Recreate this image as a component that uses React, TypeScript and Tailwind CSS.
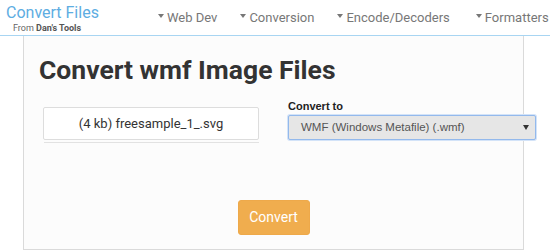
import React from "react";

const roboto = { fontFamily: "Roboto, 'Liberation Sans', sans-serif" };

function Caret() {
  return (
    <span className="inline-block w-0 h-0 border-l-[3px] border-r-[3px] border-t-[4px] border-l-transparent border-r-transparent border-t-[#777] mr-[3px] mb-[2px]" />
  );
}

function NavItem({ label }: { label: string }) {
  return (
    <div className="flex items-center text-[13px] text-[#777] leading-none shrink-0">
      <Caret />
      <span>{label}</span>
    </div>
  );
}

export default function App() {
  return (
    <div className="w-[550px] h-[251px] bg-white overflow-hidden" style={roboto}>
      <header className="h-[36px] border-b border-[#a8d5f2] flex items-center">
        <div className="w-[158px] shrink-0 pl-[6px] flex flex-col">
          <span className="text-[16px] leading-[18px] text-[#5dade2] mt-[2px]">Convert Files</span>
          <span className="text-[9px] leading-[10px] pl-[7px] text-[#666] mt-[1px]">
            From <span className="font-bold text-[#555]">Dan's Tools</span>
          </span>
        </div>
        <nav className="flex items-center gap-[23px] mb-[1px]">
          <NavItem label="Web Dev" />
          <NavItem label="Conversion" />
          <div className="mr-[3px]">
            <NavItem label="Encode/Decoders" />
          </div>
          <NavItem label="Formatters" />
        </nav>
      </header>
      <main className="ml-[23px] w-[501px] h-[214px] border-x border-b border-[#dadada] bg-[#fcfcfc]">
        <h1 className="pt-[18px] pl-[15px] text-[26.5px] leading-[31px] font-bold text-[#333] whitespace-nowrap">
          Convert wmf Image Files
        </h1>
        <div className="flex items-start mt-[13px] pl-[19px]">
          <div className="w-[216px] shrink-0 mt-[9px] flex flex-col">
            <div className="h-[33px] border border-[#dddddd] rounded-[2px] bg-white flex items-center justify-center text-[13px] text-[#333]">
              (4 kb) freesample_1_.svg
            </div>
            <div className="mt-[2px] ml-[1px] h-px bg-[#e2e2e2]" />
          </div>
          <div className="ml-[29px] shrink-0 flex flex-col" style={{ fontFamily: "'Liberation Sans', Arial, sans-serif" }}>
            <label className="text-[11px] leading-[16px] font-bold text-[#222]">Convert to</label>
            <div className="mt-px w-[248px] h-[25px] border border-[#93b9ec] ring-1 ring-[#d3e3f8] rounded-[2px] bg-[#e6e6e6] flex items-center pl-[12px] pr-[6px] text-[11.5px] text-[#555]">
              <span className="flex-1">WMF (Windows Metafile) (.wmf)</span>
              <span className="inline-block w-0 h-0 border-l-[3px] border-r-[3px] border-t-[5px] border-l-transparent border-r-transparent border-t-[#333]" />
            </div>
          </div>
        </div>
        <div className="flex justify-center mt-[57px]">
          <button className="w-[72px] h-[35px] rounded-[3px] bg-[#f0ad4e] border border-[#eea94a] text-white text-[14px]">
            Convert
          </button>
        </div>
      </main>
    </div>
  );
}
